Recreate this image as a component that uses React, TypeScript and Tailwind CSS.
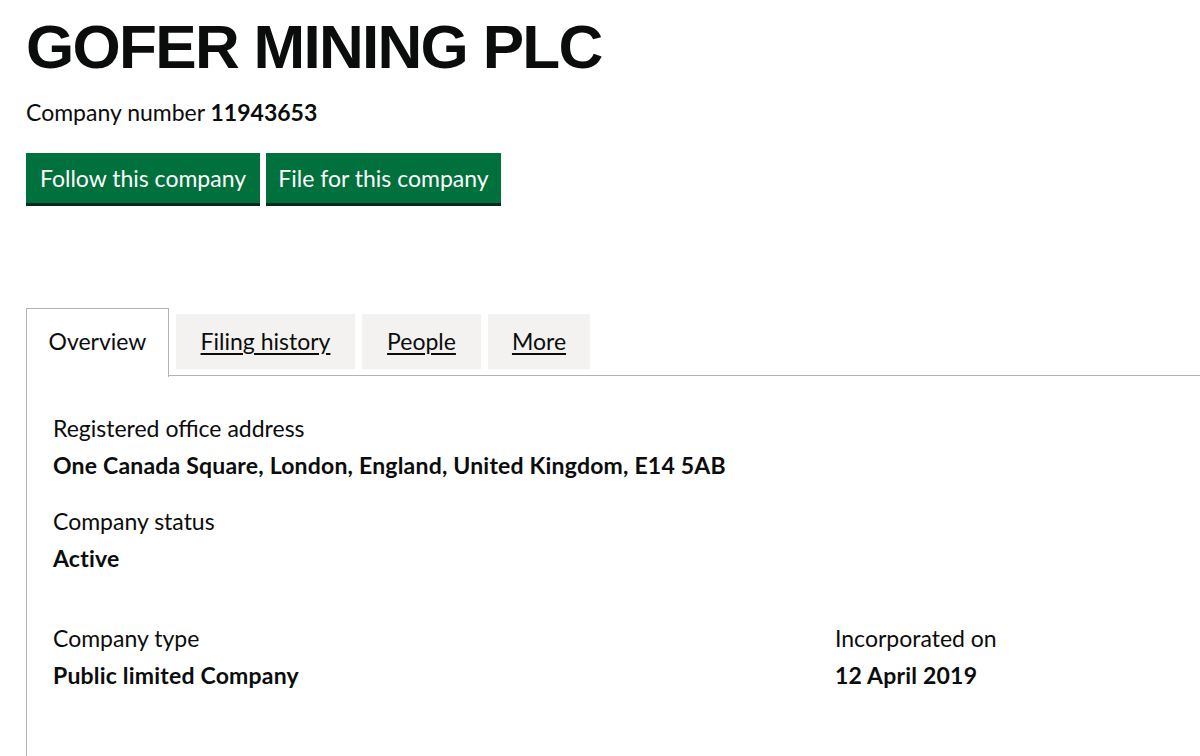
import React from "react";

const body = "font-['Lato',_'Liberation_Sans',_sans-serif]";

function Field({ label, value }: { label: string; value: string }) {
  return (
    <div>
      <div className="text-[23px] leading-[28px] text-[#0b0c0c]">{label}</div>
      <div className="mt-[9px] text-[23px] leading-[28px] font-bold tracking-[0.2px] text-[#0b0c0c]">{value}</div>
    </div>
  );
}

export default function App() {
  const tabs = [
    { label: "Filing history", w: "w-[179px]" },
    { label: "People", w: "w-[119px]" },
    { label: "More", w: "w-[102px]" },
  ];
  return (
    <div className={`w-[1200px] h-[756px] overflow-hidden bg-white text-[#0b0c0c] ${body}`}>
      <div className="pl-[26px] pt-[12px]">
        <h1 className="font-['Liberation_Sans',_Arial,_sans-serif] font-bold text-[62px] leading-[70px] tracking-[-1.7px] text-[#0b0c0c]">
          GOFER MINING PLC
        </h1>
        <p className="mt-[16px] text-[23px] leading-[28px]">
          Company number <strong className="font-bold">11943653</strong>
        </p>
        <div className="mt-[27px] flex gap-[6px]">
          <button className="h-[50px] w-[234px] bg-[#00703c] text-white text-[23px] shadow-[0_3px_0_#002d18]">
            Follow this company
          </button>
          <button className="h-[50px] w-[235px] bg-[#00703c] text-white text-[23px] shadow-[0_3px_0_#002d18]">
            File for this company
          </button>
        </div>
      </div>

      <div className="mt-[105px] pl-[26px]">
        <div className="flex items-start">
          <div className="relative z-10 w-[143px] h-[69px] border border-b-0 border-[#b1b4b6] bg-white flex items-center justify-center text-[23px] -mb-px pb-[4px]">
            Overview
          </div>
          <div className="flex-1 flex items-start gap-[7px] pl-[7px] pt-[6px] border-b border-[#b1b4b6] h-[68px]">
            {tabs.map((t) => (
              <a
                key={t.label}
                href="#"
                className={`h-[55px] ${t.w} flex items-center justify-center bg-[#f3f2f1] text-[23px] underline underline-offset-[3px] text-[#0b0c0c]`}
              >
                {t.label}
              </a>
            ))}
          </div>
        </div>
        <div className="border-l border-[#b1b4b6] h-[400px] pl-[26px] pt-[38px]">
          <Field label="Registered office address" value="One Canada Square, London, England, United Kingdom, E14 5AB" />
          <div className="mt-[28px]">
            <Field label="Company status" value="Active" />
          </div>
          <div className="mt-[52px] flex">
            <div className="w-[782px]">
              <Field label="Company type" value="Public limited Company" />
            </div>
            <Field label="Incorporated on" value="12 April 2019" />
          </div>
        </div>
      </div>
    </div>
  );
}
